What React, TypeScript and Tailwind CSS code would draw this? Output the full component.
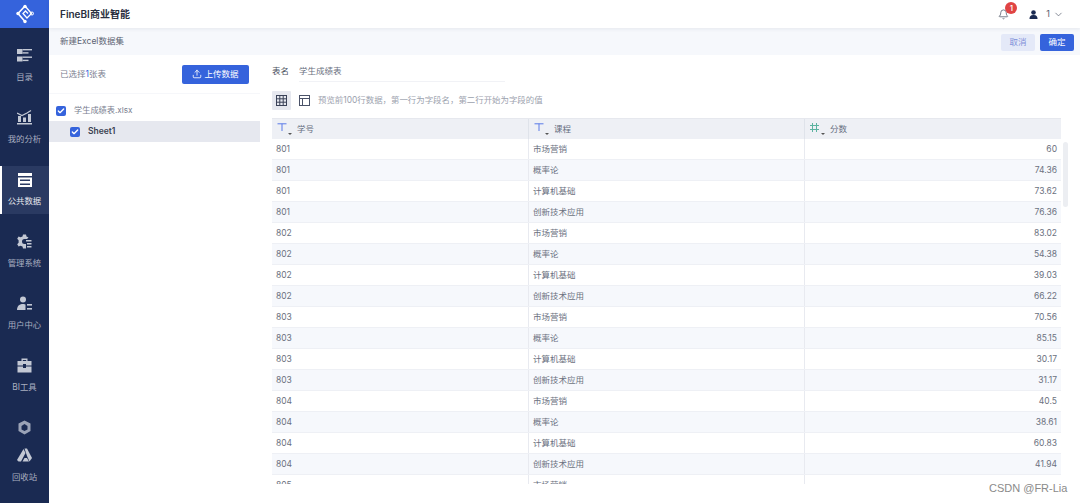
import { Bell, Check, ChevronDown, Upload } from "lucide-react";

const rows = [
  ["801", "市场营销", "60"],
  ["801", "概率论", "74.36"],
  ["801", "计算机基础", "73.62"],
  ["801", "创新技术应用", "76.36"],
  ["802", "市场营销", "83.02"],
  ["802", "概率论", "54.38"],
  ["802", "计算机基础", "39.03"],
  ["802", "创新技术应用", "66.22"],
  ["803", "市场营销", "70.56"],
  ["803", "概率论", "85.15"],
  ["803", "计算机基础", "30.17"],
  ["803", "创新技术应用", "31.17"],
  ["804", "市场营销", "40.5"],
  ["804", "概率论", "38.61"],
  ["804", "计算机基础", "60.83"],
  ["804", "创新技术应用", "41.94"],
  ["805", "市场营销", ""],
];

const Logo = () => (
  <svg width="18" height="20" viewBox="0 0 18 20" fill="none" stroke="white" strokeWidth="1.3">
    <path d="M9 2 L2 9.5 L9 17.5" strokeWidth="1.6" />
    <path d="M9 2 L15.5 9.5 L11 14 L7 9.5 L9.5 7 L12 9.5" />
    <circle cx="9" cy="2.5" r="1.7" fill="white" stroke="none" />
    <circle cx="2" cy="9.5" r="1.7" fill="white" stroke="none" />
    <circle cx="9" cy="17.5" r="1.7" fill="white" stroke="none" />
    <circle cx="16" cy="9.5" r="1.5" fill="none" strokeWidth="1" />
  </svg>
);

const IconCatalog = () => (
  <svg width="15" height="13" viewBox="0 0 15 13" fill="#c3c8d4">
    <rect x="0" y="0" width="5.5" height="5" />
    <rect x="5.5" y="0" width="9.5" height="1.4" />
    <rect x="5.5" y="3.2" width="6" height="1.4" />
    <rect x="0" y="7.5" width="5.5" height="5" />
    <rect x="5.5" y="7.5" width="9.5" height="1.4" />
    <rect x="5.5" y="10.7" width="6" height="1.4" />
  </svg>
);

const IconAnalysis = () => (
  <svg width="15" height="15" viewBox="0 0 15 15" fill="#c3c8d4">
    <path d="M0 3 L5 5.5 L10 3 L14 0.5" fill="none" stroke="#c3c8d4" strokeWidth="1.2" />
    <rect x="1" y="6" width="3" height="6" />
    <rect x="6" y="7.5" width="3" height="4.5" />
    <rect x="11" y="4" width="3" height="8" />
    <rect x="0" y="13" width="15" height="1.5" />
  </svg>
);

const IconData = () => (
  <svg width="14" height="14" viewBox="0 0 14 14" fill="white">
    <rect x="0" y="0" width="14" height="3" />
    <path d="M0 4.5 H14 V14 H0 Z M2 6.5 V8 H12 V6.5 Z M2 10.5 V12 H12 V10.5 Z" fillRule="evenodd" />
  </svg>
);

const IconManage = () => (
  <svg width="15" height="15" viewBox="0 0 15 15" fill="#c3c8d4">
    <path d="M6 0.5 H9 L9.5 2.5 L11.5 3.5 L10 5 H7.5 A2.5 2.5 0 0 0 7.5 10 H9 V12 L9 14.5 H6 L5.5 12.5 L3.5 11.8 L1.6 12.6 L0.2 10.2 L1.6 8.8 V6.2 L0.2 4.8 L1.6 2.4 L3.5 3.2 L5.5 2.5 Z" />
    <rect x="9" y="6" width="5.5" height="1.5" />
    <rect x="10" y="9" width="4.5" height="1.5" />
    <rect x="10" y="12" width="4.5" height="1.5" />
  </svg>
);

const IconUser = () => (
  <svg width="15" height="15" viewBox="0 0 15 15" fill="#c3c8d4">
    <circle cx="6" cy="3.5" r="3" />
    <path d="M0 14 C0 9.5 3 8 6 8 C7.5 8 8 8.3 8.5 8.6 V14 Z" />
    <rect x="10" y="8" width="5" height="1.6" />
    <rect x="10" y="12" width="5" height="1.6" />
  </svg>
);

const IconTools = () => (
  <svg width="15" height="15" viewBox="0 0 15 15" fill="#c3c8d4">
    <path d="M4.5 3 V0.5 H10.5 V3 H9.2 V2 H5.8 V3 Z" />
    <rect x="0.5" y="3" width="14" height="4.5" />
    <rect x="0.5" y="8.5" width="14" height="6" />
    <rect x="6" y="6" width="3" height="4" fill="#1a2a52" />
  </svg>
);

const IconHex = () => (
  <svg width="15" height="15" viewBox="0 0 15 15" fill="#9aa2b6">
    <path d="M7.5 0.5 L13.5 3.5 V11 L7.5 14.5 L1.5 11 V3.5 Z M7.5 4 L4.5 6 V9.5 L7.5 11 L10.5 9.5 V6 Z" fillRule="evenodd" />
  </svg>
);

const IconRecycle = () => (
  <svg width="15" height="14" viewBox="0 0 15 14" fill="#c3c8d4">
    <path d="M7.5 0.5 L10 0.5 L15 10 L12.5 13.5 L10 8 Z" />
    <path d="M6.5 1 L0 12 L1.5 13.5 L4 13.5 L8.5 5 Z" />
    <path d="M5.5 13.5 L12 13.5 L10 10 L7.5 10 Z" />
  </svg>
);

const NavItem = ({ icon, label, active }: { icon: React.ReactNode; label: string; active?: boolean }) => (
  <div
    className={`relative h-[48px] mt-[14px] flex flex-col items-center ${active ? "bg-[#2a3a62] text-[#e6e8ee]" : "text-[#a9afc0]"}`}
  >
    {active && <div className="absolute left-0 top-0 h-full w-[2px] bg-white" />}
    <div className="h-[15px] mt-[6px] flex items-center justify-center">{icon}</div>
    <div className="mt-[8px] text-[8.4px] leading-[12px]">{label}</div>
  </div>
);

const TextType = () => (
  <svg width="10" height="8" viewBox="0 0 10 8" fill="none" stroke="#5b7be8" strokeWidth="1">
    <path d="M0.5 0.8 H9.5 M5 0.8 V8" />
  </svg>
);

const NumType = () => (
  <svg width="9" height="9" viewBox="0 0 9 9" fill="none" stroke="#5cb3a0" strokeWidth="1">
    <path d="M2.5 0 V9 M6.5 0 V9 M0 2.5 H9 M0 6.5 H9" />
  </svg>
);

const HeaderCell = ({ type, label, width }: { type: React.ReactNode; label: string; width: string }) => (
  <div className={`${width} h-full relative flex items-center pl-[25px] text-[8.5px] text-[#666e80] border-r border-[#dfe3ea] last:border-r-0`}>
    <div className="absolute left-[5px] top-[4px]">{type}</div>
    <div className="absolute left-[16px] top-[14px] w-0 h-0 border-l-[2px] border-r-[2px] border-t-[2px] border-l-transparent border-r-transparent border-t-[#555]" />
    {label}
  </div>
);

const Box = () => (
  <div className="w-[10px] h-[10px] rounded-[2px] bg-[#3563dc] flex items-center justify-center shrink-0">
    <Check size={8} color="white" strokeWidth={4} />
  </div>
);

export default function App() {
  return (
    <div
      className="relative w-[1080px] h-[503px] overflow-hidden bg-white flex text-[#5c6373]"
      style={{ fontFamily: '"Inter", "Noto Sans CJK SC", sans-serif' }}
    >
      <div className="w-[49px] h-full shrink-0 bg-[#1a2a52] flex flex-col">
        <div className="h-[28px] bg-[#3563dc] flex items-center justify-center shrink-0">
          <Logo />
        </div>
        <NavItem icon={<IconCatalog />} label="目录" />
        <NavItem icon={<IconAnalysis />} label="我的分析" />
        <NavItem icon={<IconData />} label="公共数据" active />
        <NavItem icon={<IconManage />} label="管理系统" />
        <NavItem icon={<IconUser />} label="用户中心" />
        <NavItem icon={<IconTools />} label="BI工具" />
        <div className="mt-[20px] flex justify-center"><IconHex /></div>
        <div className="mt-[13px] flex justify-center"><IconRecycle /></div>
        <div className="mt-[9px] text-center text-[8.4px] leading-[12px] text-[#a9afc0]">回收站</div>
      </div>

      <div className="flex-1 flex flex-col min-w-0">
        <div className="h-[28px] shrink-0 bg-white flex items-center pl-[11px] pr-[16px] z-10 shadow-[0_1px_4px_rgba(30,40,70,0.08)]">
          <div className="text-[10px] font-semibold text-[#2a3040]">FineBI商业智能</div>
          <div className="ml-auto relative flex items-center">
            <Bell size={11} color="#6b7280" />
            <div className="absolute left-[7px] top-[-5px] w-[12px] h-[12px] rounded-full bg-[#e04444] text-white text-[8px] leading-[12px] text-center font-medium">1</div>
            <svg className="ml-[20px]" width="9" height="9" viewBox="0 0 9 9" fill="#1a2a52">
              <circle cx="4.5" cy="2.5" r="2.3" />
              <path d="M0.5 9 C0.5 5.5 2.5 5 4.5 5 C6.5 5 8.5 5.5 8.5 9 Z" />
            </svg>
            <span className="ml-[8px] text-[9px] text-[#555c6c]">1</span>
            <ChevronDown className="ml-[3px]" size={11} color="#555c6c" strokeWidth={1.5} />
          </div>
        </div>

        <div className="h-[27px] shrink-0 bg-[#f6f8fc] flex items-center pl-[11px] pr-[6px]">
          <div className="text-[8.5px] text-[#5c6373]">新建Excel数据集</div>
          <div className="ml-auto flex gap-[5px] pt-[1px]">
            <div className="w-[34px] h-[17px] rounded-[2px] bg-[#e4e9f8] text-[#7f8fd8] text-[8.5px] flex items-center justify-center">取消</div>
            <div className="w-[34px] h-[17px] rounded-[2px] bg-[#3563dc] text-white text-[8.5px] flex items-center justify-center">确定</div>
          </div>
        </div>

        <div className="flex-1 flex min-h-0">
          <div className="w-[211px] shrink-0 flex flex-col">
            <div className="h-[39px] shrink-0 flex items-center pl-[11px] pr-[11px] border-b border-[#f6f7fa]">
              <div className="text-[8.5px] text-[#7a8090]">
                已选择<span className="text-[#3563dc]">1</span>张表
              </div>
              <div className="ml-auto w-[67px] h-[19px] rounded-[2px] bg-[#3563dc] text-white text-[8.5px] flex items-center justify-center gap-[2px]">
                <Upload size={10} strokeWidth={2} />
                上传数据
              </div>
            </div>
            <div className="h-[27px] flex items-center pl-[7px] pt-[6px]">
              <Box />
              <span className="ml-[8px] text-[8.2px] text-[#7a8090]">学生成绩表.xlsx</span>
            </div>
            <div className="h-[21px] bg-[#e6e8ef] flex items-center pl-[21px]">
              <Box />
              <span className="ml-[8px] text-[8.5px] font-semibold text-[#3a4050]">Sheet1</span>
            </div>
          </div>

          <div className="flex-1 min-w-0 pl-[12px] relative">
            <div className="h-[27px] flex items-center text-[8.5px]">
              <span className="text-[#4a5060] pt-[6px]">表名</span>
              <span className="ml-[10px] w-[206px] h-[27px] pt-[6px] leading-[21px] border-b border-[#f1f2f6] text-[#6a7080]">学生成绩表</span>
            </div>
            <div className="h-[36px] flex items-center">
              <div className="w-[19px] h-[19px] bg-[#e6e8ef] rounded-[1px] flex items-center justify-center">
                <svg width="11" height="11" viewBox="0 0 11 11" fill="none" stroke="#3a4258" strokeWidth="1">
                  <rect x="0.5" y="0.5" width="10" height="10" />
                  <path d="M3.8 0.5 V10.5 M7.2 0.5 V10.5 M0.5 3.8 H10.5 M0.5 7.2 H10.5" />
                </svg>
              </div>
              <svg className="ml-[8px]" width="11" height="11" viewBox="0 0 11 11" fill="none" stroke="#4a5268" strokeWidth="1">
                <rect x="0.5" y="0.5" width="10" height="10" />
                <path d="M0.5 3.5 H10.5 M3.5 3.5 V10.5" />
              </svg>
              <span className="ml-[8px] text-[8.44px] text-[#9ca2ae]">预览前100行数据，第一行为字段名，第二行开始为字段的值</span>
            </div>

            <div className="w-[789px] h-[366px] overflow-hidden">
              <div className="h-[21px] bg-[#eef0f5] flex border-t border-[#e6e8ee]">
                <HeaderCell type={<TextType />} label="学号" width="w-[257px]" />
                <HeaderCell type={<TextType />} label="课程" width="w-[276px]" />
                <HeaderCell type={<NumType />} label="分数" width="w-[256px]" />
              </div>
              {rows.map((row, i) => (
                <div
                  key={i}
                  className={`h-[21px] flex items-center text-[8.5px] text-[#6b7180] border-b border-[#eef0f5] ${i % 2 === 1 ? "bg-[#f6f8fc]" : "bg-white"}`}
                >
                  <div className="w-[257px] h-full flex items-center pl-[4px] border-r border-[#e8eaf0]">{row[0]}</div>
                  <div className="w-[276px] h-full flex items-center pl-[4px] border-r border-[#e8eaf0]">{row[1]}</div>
                  <div className="w-[256px] h-full flex items-center justify-end pr-[4px]">{row[2]}</div>
                </div>
              ))}
            </div>

            <div className="absolute left-[803px] top-[87px] w-[5px] h-[65px] rounded-[3px] bg-[#eceef2]" />
          </div>
        </div>
      </div>

      <div className="absolute left-[989px] top-[482px] text-[11px] leading-[13px] text-[#8a8a8a]" style={{ fontFamily: '"Liberation Sans", sans-serif' }}>
        CSDN @FR-Lia
      </div>
    </div>
  );
}
